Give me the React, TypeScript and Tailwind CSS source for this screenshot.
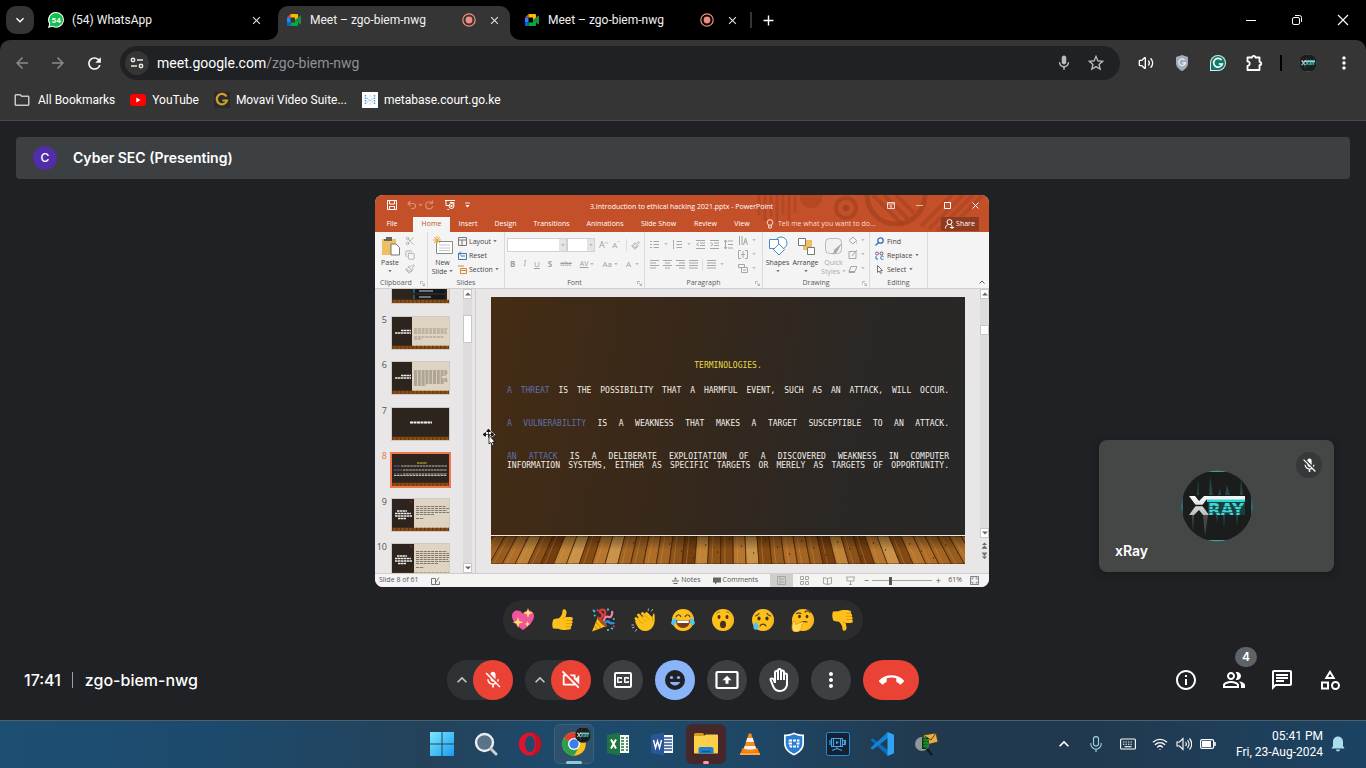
import React from "react";
import {
  MdArrowBack,
  MdArrowForward,
  MdRefresh,
  MdStarOutline,
  MdMoreVert,
  MdMicOff,
  MdOutlineMic,
  MdOutlineVideocamOff,
  MdOutlineClosedCaption,
  MdOutlineBackHand,
  MdCallEnd,
  MdInfoOutline,
  MdOutlinePeopleAlt,
  MdOutlineChat,
  MdOutlineCategory,
  MdClose,
  MdAdd,
  MdExpandMore,
  MdExpandLess,
  MdOutlineFolder,
} from "react-icons/md";
import { Volume2, Wifi, Scissors, Copy, Paintbrush } from "lucide-react";

/* ---------- shared drawings ---------- */

function MeetLogo() {
  return (
    <svg viewBox="0 0 16 16" className="size-4 shrink-0" aria-hidden="true">
      <path d="M1 5.5 4.5 2v3.500z" fill="#ea4335" />
      <path d="M1 5.500h3.500v5H1z" fill="#2684fc" />
      <path d="M1 10.500h3.500V14H2a1 1 0 0 1-1-1z" fill="#0066da" />
      <path d="M4.500 2H11a1 1 0 0 1 1 1v4L9 8.500v-3H4.500z" fill="#ffba00" />
      <path d="M4.500 10.500H9V8l3 1.500V13a1 1 0 0 1-1 1H4.500z" fill="#00ac47" />
      <path d="M9 8l5-4.300c.4-.3 1-.1 1 .4v7.800c0 .5-.6.700-1 .4z" fill="#1e8e3e" />
    </svg>
  );
}

function WhatsAppLogo() {
  return (
    <svg viewBox="0 0 16 16" className="size-4 shrink-0" aria-hidden="true">
      <path d="M8.200 0a7.800 7.800 0 1 1-3.700 14.700L0 16l1.200-4.200A7.800 7.800 0 0 1 8.200 0z" fill="#fff" />
      <path d="M8.200 1a6.800 6.800 0 1 1-3.400 12.700L1.500 14.500l.9-3A6.800 6.800 0 0 1 8.200 1z" fill="#12c04b" />
      <text x="8.200" y="10.900" textAnchor="middle" fontSize="8" fontWeight="700" fontFamily="Roboto, sans-serif" fill="#fff">
        54
      </text>
    </svg>
  );
}

function RecordDot() {
  return (
    <svg viewBox="0 0 14 14" className="size-3.5 shrink-0" role="img" aria-label="Recording">
      <circle cx="7" cy="7" r="6.200" fill="none" stroke="#f28b82" strokeWidth="1.200" />
      <circle cx="7" cy="7" r="3.400" fill="#f28b82" />
    </svg>
  );
}

function XrayAvatar({ className }: { className: string }) {
  return (
    <svg viewBox="0 0 72 72" className={className} role="img" aria-label="xRay avatar">
      <defs>
        <clipPath id="xr-clip">
          <circle cx="36" cy="36" r="35.500" />
        </clipPath>
        <linearGradient id="xr-silver" x1="0" x2="0" y1="0" y2="1">
          <stop offset="0" stopColor="#ffffff" />
          <stop offset="1" stopColor="#b9bcbc" />
        </linearGradient>
      </defs>
      <g clipPath="url(#xr-clip)">
        <rect width="72" height="72" fill="#1b1c1c" />
        <path d="M0 0h72v2H0zM0 70h72v2H0z" fill="#3d9d9e" />
        <path d="M0 22h1.500v28H0zM70.500 22H72v28h-1.500z" fill="#35b5b8" />
        <path d="M16 25l1-18 1 18zM28 25l1-19 3 19zM37 25l2-7 1 7zM44 25l2-10 3 10zM59 25l1-16 2 16zM35 45l1 8 1-8zM42 45l1 13 1-13zM55 45l1 12 1-12z" fill="#24484a" />
        <path d="M13 45l-1 17-1-17zM22 45l2 21 3-21z" fill="#454848" />
        <path d="M27 28h37v17H27z" fill="#153f41" />
        <text x="27" y="44.500" fontSize="16.500" fontWeight="700" fontFamily="DejaVu Sans, sans-serif" fill="#45d6d4">
          RAY
        </text>
        <path d="M27 36.500h37M27 39.500h37M27 42.500h37" stroke="#174446" strokeWidth=".7" />
        <path d="M26 29h38v3H26z" fill="#25d8d6" />
        <path d="M24 26h40v3.500H23z" fill="#f2f4f4" />
        <path d="M8 26h6l4 5 5-5h5l-7 9.500 7 9.500h-6l-4-5-5 5H8l7-9.500z" fill="url(#xr-silver)" />
        <path d="M10 35.500h17" stroke="#1b1d1d" strokeWidth="1.500" />
      </g>
    </svg>
  );
}

/* ---------- browser chrome ---------- */

type Tab = { title: string; icon: React.ReactNode; recording: boolean; active: boolean };

const TABS: Tab[] = [
  { title: "(54) WhatsApp", icon: <WhatsAppLogo />, recording: false, active: false },
  { title: "Meet – zgo-biem-nwg", icon: <MeetLogo />, recording: true, active: true },
  { title: "Meet – zgo-biem-nwg", icon: <MeetLogo />, recording: true, active: false },
];

function BrowserTab({ tab }: { tab: Tab }) {
  return (
    <div
      className={
        tab.active
          ? "relative flex h-[34px] w-[232px] items-center rounded-t-[10px] bg-[#353535] pb-1.5 pl-2 pr-2"
          : "relative flex h-[34px] w-[232px] items-center pb-1.5 pl-2 pr-2"
      }
    >
      {tab.active && (
        <>
          <svg viewBox="0 0 10 10" className="absolute -left-2.5 bottom-0 size-2.5" aria-hidden="true">
            <path d="M10 0v10H0A10 10 0 0 0 10 0z" fill="#353535" />
          </svg>
          <svg viewBox="0 0 10 10" className="absolute -right-2.5 bottom-0 size-2.5" aria-hidden="true">
            <path d="M0 0v10h10A10 10 0 0 1 0 0z" fill="#353535" />
          </svg>
        </>
      )}
      <button type="button" className="flex min-w-0 flex-1 items-center gap-2 text-left text-xs text-[#f1f1f1]">
        {tab.icon}
        <span className="truncate">{tab.title}</span>
      </button>
      {tab.recording && <RecordDot />}
      <button type="button" aria-label="Close tab" className="ml-2.5 grid size-4 place-items-center text-[#e3e3e3]">
        <MdClose size={13} />
      </button>
    </div>
  );
}

function TabStrip() {
  return (
    <div className="flex h-10 items-end bg-black">
      <button type="button" aria-label="Search tabs" className="mb-1.5 ml-1.5 mr-1.5 grid size-7 place-items-center rounded-[10px] bg-[#353535] text-white">
        <MdExpandMore size={16} />
      </button>
      <div className="flex gap-1.5">
        {TABS.map((t, i) => (
          <BrowserTab key={i} tab={t} />
        ))}
      </div>
      <span className="mb-3 ml-0.5 h-4 w-0.5 bg-[#353535]" />
      <button type="button" aria-label="New tab" className="mb-2.5 ml-1.5 grid size-5 place-items-center text-white">
        <MdAdd size={17} />
      </button>
      <div className="ml-auto flex h-10">
        <button type="button" aria-label="Minimize" className="grid w-[46px] place-items-center">
          <svg viewBox="0 0 12 12" className="size-3"><path d="M1 6.500h10" stroke="#fff" /></svg>
        </button>
        <button type="button" aria-label="Restore" className="grid w-[46px] place-items-center">
          <svg viewBox="0 0 12 12" className="size-3" fill="none" stroke="#fff">
            <rect x="1.500" y="3.500" width="7" height="7" rx="1.500" />
            <path d="M4 1.500h4.500a2 2 0 0 1 2 2V8" />
          </svg>
        </button>
        <button type="button" aria-label="Close" className="grid w-[46px] place-items-center">
          <svg viewBox="0 0 12 12" className="size-3"><path d="M1 1l10 10M11 1 1 11" stroke="#fff" strokeWidth="1.100" /></svg>
        </button>
      </div>
    </div>
  );
}

function AddressRow() {
  return (
    <div className="flex h-[46px] items-center">
      <div className="flex gap-4 pl-3 text-[#8a8a8a]">
        <button type="button" aria-label="Back" className="grid size-5 place-items-center"><MdArrowBack size={18} /></button>
        <button type="button" aria-label="Forward" className="grid size-5 place-items-center"><MdArrowForward size={18} /></button>
        <button type="button" aria-label="Reload" className="grid size-5 place-items-center text-white"><MdRefresh size={19} /></button>
      </div>
      <div className="ml-4 flex h-[34px] flex-1 items-center rounded-full bg-[#202124] pl-[5px] pr-3.5">
        <button type="button" aria-label="Site information" className="grid size-6 place-items-center rounded-full bg-[#353535]">
          <svg viewBox="0 0 14 12" className="h-3 w-3.5" fill="none" stroke="#e8e8e8" strokeWidth="1.500">
            <circle cx="3" cy="3" r="1.700" />
            <path d="M7 3h6M1 9h6" />
            <circle cx="11" cy="9" r="1.700" />
          </svg>
        </button>
        <div className="ml-2 flex flex-1 items-center text-sm">
          <input aria-label="Address" defaultValue="meet.google.com" className="field-sizing-content bg-transparent text-white outline-none" />
          <span className="text-[#8f9195]">/zgo-biem-nwg</span>
        </div>
        <div className="flex gap-3 text-[#b9bbbe]">
          <button type="button" aria-label="Microphone access" className="grid size-5 place-items-center"><MdOutlineMic size={18} /></button>
          <button type="button" aria-label="Bookmark" className="grid size-5 place-items-center"><MdStarOutline size={20} /></button>
        </div>
      </div>
      <div className="ml-4 flex items-center gap-4 pr-3 text-white">
        <button type="button" aria-label="Sound" className="grid size-5 place-items-center"><Volume2 size={16} /></button>
        <button type="button" aria-label="Shield extension" className="grid size-5 place-items-center">
          <svg viewBox="0 0 14 16" className="h-4 w-3.5">
            <path d="M7 0l6 2v6c0 4-3 6.500-6 8-3-1.500-6-4-6-8V2z" fill="#a4acbb" />
            <path d="M9.500 5a3.300 3.300 0 1 0 .8 3H7.500" fill="none" stroke="#e9edf5" strokeWidth="1.300" />
          </svg>
        </button>
        <button type="button" aria-label="Grammar extension" className="grid size-5 place-items-center">
          <svg viewBox="0 0 16 16" className="size-4">
            <path d="M8 0a8 8 0 1 1 0 16H0V8a8 8 0 0 1 8-8z" fill="#d5ece7" />
            <path d="M8 1a7 7 0 1 1 0 14H1V8a7 7 0 0 1 7-7z" fill="#0e7c66" />
            <path d="M11.500 5A4.400 4.400 0 1 0 12.300 9H8.700" fill="none" stroke="#fff" strokeWidth="1.700" />
          </svg>
        </button>
        <button type="button" aria-label="Extensions" className="grid size-5 place-items-center">
          <svg viewBox="0 0 18 18" className="size-[18px]" fill="none" stroke="#fff" strokeWidth="1.800" strokeLinejoin="round">
            <path d="M2.500 3.500H7a1.700 1.700 0 0 1 3.400 0H14.500v4.300a1.700 1.700 0 0 1 0 3.400V16h-12v-4.200a2.200 2.200 0 0 0 0-4.400z" />
          </svg>
        </button>
        <span className="h-4 w-0.5 bg-black" />
        <button type="button" aria-label="Profile" className="grid size-5 place-items-center"><XrayAvatar className="size-[18px]" /></button>
        <button type="button" aria-label="Browser menu" className="grid size-5 place-items-center"><MdMoreVert size={20} /></button>
      </div>
    </div>
  );
}

function Bookmarks() {
  return (
    <nav className="flex h-[34px] items-center gap-[15px] pb-1.5 pl-3.5 text-xs text-white">
      <a href="#all" className="flex items-center gap-2"><MdOutlineFolder size={18} className="-mx-px text-[#c7c7c7]" />All Bookmarks</a>
      <a href="#youtube" className="flex items-center gap-1.5">
        <svg viewBox="0 0 16 12" className="h-3 w-4"><rect width="16" height="12" rx="3" fill="#f00" /><path d="M6.300 3.500v5l4.200-2.500z" fill="#fff" /></svg>
        YouTube
      </a>
      <a href="#movavi" className="flex items-center gap-1.5">
        <svg viewBox="0 0 16 16" className="size-4"><rect width="16" height="16" fill="#2a2a2a" /><path d="M12.500 4.500A5.200 5.200 0 1 0 13 8.500H8.500" fill="none" stroke="#d3a02a" strokeWidth="2.200" /></svg>
        Movavi Video Suite...
      </a>
      <a href="#metabase" className="flex items-center gap-1.5">
        <svg viewBox="0 0 16 16" className="size-4">
          <rect width="16" height="16" fill="#fff" />
          <path d="M3.500 3v10M12.500 3v10" stroke="#509ee3" strokeWidth="1.500" strokeDasharray="1.500 1" />
          <path d="M5 6l3 3 3-3" fill="none" stroke="#8fc0ee" strokeWidth="1.300" strokeDasharray="1.300 .8" />
          <path d="M8 3v2M8 11v2M5.700 9v2M10.300 9v2" stroke="#c9dff5" strokeWidth="1.200" />
        </svg>
        metabase.court.go.ke
      </a>
    </nav>
  );
}

/* ---------- shared presentation ---------- */

const WOOD = ["#b8732a", "#8d4f14", "#c98a3a", "#9f6120", "#d39a4c", "#7a420f", "#ad6a25", "#c07c30", "#935619"];

function WoodFloor({ className }: { className: string }) {
  const planks = Array.from({ length: 42 }, (_, i) => {
    const t0 = i * 12 - 10;
    const t1 = t0 + 12;
    const spread = (x: number) => 237 + (x - 237) * 1.07;
    return (
      <g key={i}>
        <polygon
          points={`${t0},0 ${t1},0 ${spread(t1)},28 ${spread(t0)},28`}
          fill={WOOD[(i * 5 + (i % 4)) % WOOD.length]}
          stroke="#4a260a"
          strokeWidth=".8"
        />
        <path d={`M${t0 + 4} 0L${spread(t0 + 4)} 28`} stroke="#e0aa62" strokeWidth=".9" opacity=".4" />
        <path d={`M${t0 + 8} ${((i * 7) % 20) + 3}h1.200`} stroke="#2c1604" strokeWidth="1" />
      </g>
    );
  });
  return (
    <svg viewBox="0 0 474 28" preserveAspectRatio="none" className={className} aria-hidden="true">
      <defs>
        <linearGradient id="floor-shade" x1="0" x2="0" y1="0" y2="1">
          <stop offset="0" stopColor="#000" stopOpacity=".45" />
          <stop offset=".5" stopColor="#000" stopOpacity=".05" />
        </linearGradient>
      </defs>
      {planks}
      <rect width="474" height="28" fill="url(#floor-shade)" />
    </svg>
  );
}

const MENU = [
  { name: "File", cls: "w-[38px] pr-1" },
  { name: "Home", cls: "w-[37px] bg-[#f5f4f5] font-medium text-[#c4502a]" },
  { name: "Insert", cls: "w-9" },
  { name: "Design", cls: "w-[39px]" },
  { name: "Transitions", cls: "w-[53px]" },
  { name: "Animations", cls: "w-[54px]" },
  { name: "Slide Show", cls: "w-[53px]" },
  { name: "Review", cls: "w-[41px]" },
  { name: "View", cls: "w-8" },
];

function Caret() {
  return (
    <svg viewBox="0 0 4 3" className="h-[3px] w-1 shrink-0 opacity-70" aria-hidden="true"><path d="M.3 0h3.400L2 2.200z" fill="currentColor" /></svg>
  );
}

function PptHeader() {
  return (
    <div className="relative h-[37px] overflow-hidden bg-[#c4502a] text-[7px] text-white">
      <svg viewBox="0 0 250 37" className="absolute right-0 top-0 h-[37px] w-[250px]" fill="none" stroke="#a9421f" aria-hidden="true">
        <path d="M20 0v20M26 0v26M32 0v22M38 0v28M44 0v20M50 0v28M56 0v18" strokeWidth="3" opacity=".55" />
        <circle cx="72" cy="2" r="11" fill="#a9421f" stroke="none" opacity=".6" />
        <circle cx="107" cy="13" r="10" strokeWidth="4" opacity=".8" />
        <circle cx="107" cy="13" r="3" fill="#a9421f" />
        <circle cx="157" cy="0" r="29" strokeWidth="5" opacity=".8" />
        <path d="M134 0l30 30M145 0l24 24M157 0l18 18" strokeWidth="4" opacity=".7" />
        <path d="M190 34l34-34M198 36l36-36M207 37l37-37M182 31l31-31" strokeWidth="4" opacity=".6" />
      </svg>
      <div className="relative flex h-[22px] items-center pb-0.5 pl-3 pr-2">
        <div className="flex w-[202px] items-center gap-2.5">
          <svg viewBox="0 0 10 10" className="size-2.5" fill="none" stroke="#fff"><path d="M.5.5h9v9h-9zM2.500.5v3.500h5V.5M2.500 9.500v-3h5v3" /></svg>
          <svg viewBox="0 0 28 10" className="h-2.5 w-7" fill="none" stroke="#dc8c70" strokeWidth="1.200">
            <path d="M3.500 1 1 3.500 3.500 6M1 3.500h5a2.500 2.500 0 0 1 0 5H4" /><path d="M12 4l1.500 1.500L15 4" /><path d="M25 3a3.600 3.600 0 1 0 .8 3M25.500.5V3.500h-3" />
          </svg>
          <svg viewBox="0 0 10 10" className="size-2.5" fill="none" stroke="#fff"><path d="M0 .5h10M1 .5v5h3M4 9.500l-2 .5M5 2.500h4v2" /><circle cx="6.500" cy="6" r="2.500" /><path d="M6 5l1.500 1L6 7z" /></svg>
          <svg viewBox="0 0 5 6" className="h-1.5 w-[5px]"><path d="M0 1h5" stroke="#fff" strokeWidth=".8" /><path d="M.5 3h4L2.500 5.500z" fill="#fff" /></svg>
        </div>
        <span className="whitespace-nowrap pl-px pt-1">3.Introduction to ethical hacking 2021.pptx - PowerPoint</span>
        <div className="ml-auto flex items-center gap-[21px] pr-0.5">
          <svg viewBox="0 0 8 7" className="h-[7px] w-2" fill="none" stroke="#fff"><path d="M.5.5h7v6h-7zM.5 2h7M4 6V3.500M3 4.500l1-1 1 1" strokeWidth=".8" /></svg>
          <svg viewBox="0 0 7 7" className="size-[7px]"><path d="M0 3.500h7" stroke="#e9b7a5" /></svg>
          <svg viewBox="0 0 7 7" className="size-[7px]" fill="none" stroke="#fff"><path d="M.5.500h6v6h-6z" /></svg>
          <svg viewBox="0 0 7 7" className="size-[7px]" stroke="#fff"><path d="M.5.500l6 6M6.500.500l-6 6" /></svg>
        </div>
      </div>
      <div className="relative flex h-[15px] items-stretch">
        {MENU.map((m) => (
          <button type="button" key={m.name} className={"whitespace-nowrap text-center " + m.cls}>{m.name}</button>
        ))}
        <svg viewBox="0 0 8 10" className="ml-2 mt-0.5 h-2.5 w-2" fill="none" stroke="#f6ddd4"><circle cx="4" cy="3.500" r="2.800" /><path d="M2.700 6v3h2.600V6" /></svg>
        <button type="button" className="ml-1 whitespace-nowrap text-[#f6ddd4]">Tell me what you want to do...</button>
        <button type="button" className="ml-auto mr-2.5 flex h-[14px] w-[38px] items-center justify-center gap-0.5 bg-[#8e3c20]">
          <svg viewBox="0 0 9 10" className="h-2.5 w-[9px]" fill="none" stroke="#fff"><circle cx="4.500" cy="3" r="2.500" /><path d="M.5 9.500c0-4 3-4 4-4s2 .3 2.500 1M5 8.500h4M7 6.500v3.500" /></svg>
          Share
        </button>
      </div>
    </div>
  );
}

function Group({ name, width, children, launcher = true }: { name: string; width: string; children: React.ReactNode; launcher?: boolean }) {
  return (
    <div className={"relative flex h-14 flex-col border-r border-[#dcdadb] " + width}>
      <div className="flex h-[46px] pt-1">{children}</div>
      <div className="text-center leading-[10px] text-[#5c5c5c]">{name}</div>
      {launcher && (
        <svg viewBox="0 0 5 5" className="absolute bottom-0.5 right-0.5 size-[5px]" fill="none" stroke="#a8a8a8" strokeWidth=".8" aria-hidden="true"><path d="M.5 3V.5H3M2 2l2.500 2.500M4.500 2.500v2h-2" /></svg>
      )}
    </div>
  );
}

function BigTool({ icon, lines, width, dim = false }: { icon: React.ReactNode; lines: string[]; width: string; dim?: boolean }) {
  return (
    <button type="button" className={"flex flex-col items-center leading-[9px] " + width + (dim ? " text-[#a9a9a9]" : "")}>
      {icon}
      <span className="mt-0.5 whitespace-nowrap">{lines[0]}</span>
      <span className="flex h-[9px] items-center gap-0.5">{lines[1]}<Caret /></span>
    </button>
  );
}

function LineIcon({ d, wide = false }: { d: string; wide?: boolean }) {
  return (
    <svg viewBox={wide ? "0 0 14 9" : "0 0 9 9"} className={wide ? "h-[9px] w-3.5 shrink-0" : "size-[9px] shrink-0"} fill="none" stroke="#a6a6a6" aria-hidden="true"><path d={d} /></svg>
  );
}

function Ribbon() {
  return (
    <div className="flex h-[57px] border-b border-[#cfcdce] bg-[#f5f4f5] text-[7px] text-[#444]">
      <Group name="Clipboard" width="w-[53px] pr-2.5">
        <BigTool
          width="w-[30px]"
          lines={["Paste", ""]}
          icon={
            <svg viewBox="0 0 19 20" className="h-5 w-[19px]"><path d="M1 3h14v16H1z" fill="#eebf63" /><path d="M5 1h6v4H3V3h2z" fill="#666" /><path d="M10 8h5l3.500 3.500V19H10z" fill="#fff" stroke="#777" /></svg>
          }
        />
        <div className="flex flex-col items-center gap-1 text-[#a6a6a6]">
          <Scissors size={10} /><Copy size={10} /><Paintbrush size={10} />
        </div>
      </Group>
      <Group name="Slides" width="w-[77px]" launcher={false}>
        <BigTool
          width="w-[29px]"
          lines={["New", "Slide"]}
          icon={
            <svg viewBox="0 0 20 20" className="size-5"><path d="M3.500 5.500h16v12h-16z" fill="#fff" stroke="#8b8b8b" /><path d="M6 9h11M6 12h11M6 14.500h11" stroke="#c6c6c6" /><path d="M4 0v8M0 4h8M1 1l6 6M7 1 1 7" stroke="#e9a93c" /></svg>
          }
        />
        <div className="flex flex-col gap-[3px] pl-px leading-[11px]">
          {[
            ["Layout", "M.5.5h8v8h-8zM.5 3h8M4 3v5.500", "#777"],
            ["Reset", "M.5 2.500h8v6h-8zM3 5h4M3 .5 1 2.500l2 2", "#3b78b8"],
            ["Section", "M2.500 3.500h6v5h-6zM0 1h6M2 5.500h6", "#d58a3d"],
          ].map(([label, d, c]) => (
            <button type="button" key={label} className="flex items-center gap-0.5">
              <svg viewBox="0 0 9 9" className="size-[9px]" fill="none" stroke={c}><path d={d} /></svg>
              {label}
              {label !== "Reset" && <Caret />}
            </button>
          ))}
        </div>
      </Group>
      <Group name="Font" width="w-[140px]">
        <div className="flex w-full flex-col pl-0.5 text-[#a0a0a0]">
          <div className="flex items-center pt-0.5">
            <label className="flex h-3.5 w-[60px] items-center border border-[#d2d0d1] bg-white">
              <input aria-label="Font name" className="h-full min-w-0 flex-1 outline-none" />
              <span className="grid h-full w-[7px] place-items-center bg-[#e6e4e5]"><Caret /></span>
            </label>
            <label className="flex h-3.5 w-7 items-center border border-[#d2d0d1] bg-white">
              <input aria-label="Font size" className="h-full min-w-0 flex-1 outline-none" />
              <span className="grid h-full w-[7px] place-items-center bg-[#e6e4e5]"><Caret /></span>
            </label>
            <button type="button" className="ml-1 text-[9px] leading-3">A<sup className="text-[6px]">^</sup></button>
            <button type="button" className="ml-1 text-[8px] leading-3">A<sup className="text-[6px]">ˇ</sup></button>
            <span className="ml-1.5 h-3 w-px bg-[#dcdadb]" />
            <Paintbrush size={9} className="ml-1" />
          </div>
          <div className="flex items-center gap-2 pl-[3px] pt-1.5 text-[8px] leading-3">
            <b>B</b><i className="font-serif">I</i><u>U</u><b>S</b><s className="text-[7px]">abc</s>
            <span className="flex items-center gap-0.5"><u className="text-[7px]">AV</u><Caret /></span>
            <span className="flex items-center gap-0.5">Aa<Caret /></span>
            <span className="flex items-center gap-1">A<Caret /></span>
          </div>
        </div>
      </Group>
      <Group name="Paragraph" width="w-[118px]">
        <div className="flex w-[93px] flex-col gap-2.5 pl-[5px] pt-[3px] text-[#a6a6a6]">
          <div className="flex h-[11px] items-center gap-[5px]">
            <LineIcon d="M0 1.500h2M3.500 1.500H9M0 4.500h2M3.500 4.500H9M0 7.500h2M3.500 7.500H9" /><Caret />
            <LineIcon d="M.5 0v3M3.500 1.500H9M.5 3.500v2.500M3.500 4.500H9M.5 6.500V9M3.500 7.500H9" /><Caret />
            <LineIcon d="M0 .5h9M4 3h5M4 5.500h5M0 8.500h9M3 2.500 .5 4.500 3 6" />
            <LineIcon d="M0 .5h9M4 3h5M4 5.500h5M0 8.500h9M.5 2.500 3 4.500 .5 6" />
            <LineIcon d="M4 1h5M4 4.500h5M4 8h5M1.500 0v9M0 2l1.500-2L3 2M0 7l1.500 2L3 7" />
          </div>
          <div className="flex h-[9px] items-center gap-1">
            <LineIcon d="M0 .5h9M0 3h6M0 5.500h9M0 8h6" /><LineIcon d="M0 .5h9M2 3h5M0 5.500h9M2 8h5" />
            <LineIcon d="M0 .5h9M3 3h6M0 5.500h9M3 8h6" /><LineIcon d="M0 .5h9M0 3h9M0 5.500h9M0 8h9" />
            <span className="h-3 w-px bg-[#dcdadb]" />
            <LineIcon d="M0 .5h9M0 3h9M0 5.500h9M0 8h9" /><Caret />
          </div>
        </div>
        <div className="flex flex-col gap-[5px] text-[#a6a6a6]">
          {["M1.500 0v9M4 0v9M5.500 9 7.500 2l2 7M6 6h3", "M3 .5H.5v8H3M7 .5h2.500v8H7M5 1v7M3 4.500h4", "M.5.5h6v3h-6zM3.500 3.500h6v5h-6zM5 6h3"].map((d) => (
            <span key={d} className="flex items-center"><LineIcon d={d} wide /><Caret /></span>
          ))}
        </div>
      </Group>
      <Group name="Drawing" width="w-[107px]">
        <BigTool
          width="w-[29px]"
          lines={["Shapes", ""]}
          icon={
            <svg viewBox="0 0 20 20" className="size-5" fill="#fff" stroke="#4d8ac9"><circle cx="13" cy="7" r="6" /><path d="M1.500 3.500h9v9h-9z" /><path d="M11 8l5.500 5.500L11 19l-5.500-5.500z" /></svg>
          }
        />
        <BigTool
          width="w-[27px]"
          lines={["Arrange", ""]}
          icon={
            <svg viewBox="0 0 20 20" className="size-5"><path d="M7 4h9v10H7z" fill="#eebf63" /><path d="M2.500 2.500h7v7h-7zM11.500 11.500h7v7h-7z" fill="#fff" stroke="#777" /></svg>
          }
        />
        <BigTool
          dim
          width="w-[29px]"
          lines={["Quick", "Styles"]}
          icon={
            <svg viewBox="0 0 20 20" className="size-5"><rect x="1.500" y="2.500" width="16" height="15" rx="4" fill="#f1f1f3" stroke="#b9b9b9" /><path d="M18 7l-5 9-4 3 1-5z" fill="#a9a9a9" /></svg>
          }
        />
        <div className="flex flex-col gap-[5px] text-[#a6a6a6]">
          {["M1 4.500 5 1l3.500 3.500L5 8zM9 5v3", "M1 1.500h7v7H1zM4 6l5-6", "M3 2.500h6l-2 5H1zM1 7.500v1h6"].map((d) => (
            <span key={d} className="flex items-center gap-1"><LineIcon d={d} /><Caret /></span>
          ))}
        </div>
      </Group>
      <Group name="Editing" width="w-[58px]" launcher={false}>
        <div className="flex flex-col gap-[3px] pl-[5px] leading-[11px]">
          <button type="button" className="flex items-center gap-[3px]">
            <svg viewBox="0 0 9 9" className="size-[9px]" fill="none" stroke="#2f6fb5" strokeWidth="1.300"><circle cx="5.500" cy="3.500" r="2.700" /><path d="M3.500 5.500.5 8.500" /></svg>Find
          </button>
          <button type="button" className="flex items-center gap-[3px]">
            <svg viewBox="0 0 9 9" className="size-[9px]" fill="none"><circle cx="2" cy="2.500" r="1.500" stroke="#8a4fa3" /><circle cx="6.500" cy="2.500" r="1.500" stroke="#555" /><path d="M1 5v3h2M8.500 5.500a1.700 1.700 0 1 0 0 2.500" stroke="#2f6fb5" /></svg>Replace<Caret />
          </button>
          <button type="button" className="flex items-center gap-[3px]">
            <svg viewBox="0 0 9 9" className="size-[9px]" fill="#fff" stroke="#777"><path d="M2.500.5v7l1.700-1.500L5.500 8.500l1-.5-1-2.500h2z" /></svg>Select<Caret />
          </button>
        </div>
      </Group>
      <button type="button" aria-label="Collapse ribbon" className="ml-auto self-end p-1">
        <svg viewBox="0 0 6 4" className="h-1 w-1.5" fill="none" stroke="#555"><path d="M.5 3.500 3 1l2.500 2.500" /></svg>
      </button>
    </div>
  );
}

type Thumb = { n: string; kind: "menu" | "split" | "title" | "terms" | "text"; rows?: number[] };

const THUMBS: Thumb[] = [
  { n: "", kind: "menu" },
  { n: "5", kind: "split", rows: [34, 32, 33, 0, 30, 8] },
  { n: "6", kind: "split", rows: [33, 34, 32, 28, 33, 34, 30, 12] },
  { n: "7", kind: "title" },
  { n: "8", kind: "terms" },
  { n: "9", kind: "text", rows: [30, 33, 31, 33, 18, 0, 8] },
  { n: "10", kind: "text", rows: [31, 33, 34, 33, 32, 33, 22, 0, 8] },
];

function ThumbArt({ t }: { t: Thumb }) {
  const light = t.kind === "split" || t.kind === "text";
  const edge = t.kind === "text" ? 22 : 20;
  return (
    <svg viewBox="0 0 57 32" className="h-8 w-[57px]" role="img" aria-label={"Slide " + (t.n || "4")}>
      <rect width="57" height="32" fill="#2d241d" />
      {light && <rect x={edge} width={57 - edge} height="32" fill="#dfd4c2" />}
      {light && <path d={t.kind === "text" ? "M5 12h10M3 14.500h16M3 17h17M6 19.500h8" : "M9 13.500h10M3 16h16"} stroke="#ececec" strokeWidth="1.600" strokeDasharray="2.500 .4" />}
      {t.kind === "text" && <path d="M18 1.500l2 2" stroke="#b3264a" />}
      {(t.rows || []).map((w, i) => (
        <path key={i} d={`M${edge + 2} ${(t.kind === "text" ? 7.5 : t.n === "5" ? 12 : 9) + i * 2}h${w}`} stroke="#4b443c" strokeWidth=".8" strokeDasharray="3 .8" opacity={t.n === "5" ? 0.55 : 0.8} />
      ))}
      {t.kind === "menu" && (
        <g>
          <path d="M55 0h2v30h-2z" fill="#dfd4c2" />
          <path d="M21 18h32v4H21zM21 24h32v4H21z" fill="#11191d" />
          <path d="M22 18v4M22 24v4" stroke="#3e9aa0" />
          <path d="M27 20h14M27 26h12" stroke="#cfcfcf" />
        </g>
      )}
      {t.kind === "title" && <path d="M18 14.500h22" stroke="#f1f1f1" strokeWidth="1.800" strokeDasharray="3 .5" />}
      {t.kind === "terms" && (
        <g strokeDasharray="2.500 .6">
          <path d="M25 9h10" stroke="#d9cf3b" />
          <path d="M2 12h6M2 16h8M2 20h8" stroke="#5a72b0" />
          <path d="M9 12h46M11 16h44M11 20h44M2 21.500h53" stroke="#cfcfcf" strokeWidth=".9" />
        </g>
      )}
      <svg x="0" y="28.500" width="57" height="3.500" viewBox="0 0 57 3.500">
        <rect width="57" height="3.500" fill="#8a4f16" />
        <path d="M0 1.750h57" stroke="#5b300b" strokeWidth="3.500" strokeDasharray="1.500 2.500" opacity=".6" />
      </svg>
    </svg>
  );
}

function ScrollArrow({ up }: { up: boolean }) {
  return (
    <button type="button" aria-label={up ? "Scroll up" : "Scroll down"} className="grid h-2.5 w-full place-items-center border border-[#c9c7c8] bg-white">
      <svg viewBox="0 0 6 4" className="h-1 w-1.5"><path d={up ? "M0 3.500h6L3 .5z" : "M0 .5h6L3 3.500z"} fill="#666" /></svg>
    </button>
  );
}

function ThumbPane() {
  return (
    <div className="flex w-[101px] border-r border-[#cfcdce]">
      <div className="h-[284px] w-[88px] overflow-hidden">
        <ol className="-mt-[19px] grid h-[319px] grid-rows-7">
          {THUMBS.map((t) => (
            <li key={t.n} className="flex items-start">
              <span className={"-mt-0.5 flex w-3.5 justify-end pr-0.5 text-[9px] leading-[11px] " + (t.n === "8" ? "text-[#e8714a]" : "text-[#555]")}>{t.n}</span>
              <span className={t.n === "8" ? "ml-px border-2 border-[#f0764d]" : "ml-0.5 border border-[#cfcac6]"}>
                <ThumbArt t={t} />
              </span>
            </li>
          ))}
        </ol>
      </div>
      <div className="flex w-[9px] flex-col bg-[#dedcdd]">
        <ScrollArrow up />
        <span className="mt-4 h-7 border border-[#c9c7c8] bg-white" />
        <span className="flex-1" />
        <ScrollArrow up={false} />
      </div>
    </div>
  );
}

function Term({ lead, rest }: { lead: string; rest: string }) {
  return (
    <>
      <span className="text-[#5b70ab]">{lead}</span> {rest}
    </>
  );
}

function SlideStage() {
  return (
    <div className="relative flex flex-1 justify-between">
      <div className="ml-[15px] mt-2 flex h-[267px] w-[474px] flex-col font-['DejaVu_Sans_Mono','Liberation_Mono',monospace] text-[8px] leading-[9px] text-[#f3efe8]">
        <div className="flex flex-1 flex-col bg-[linear-gradient(100deg,#452c14_0%,#35281c_45%,#2a2725_75%,#282828_100%)] px-4 pt-16">
          <h2 className="text-center text-[#e6dc48]">TERMINOLOGIES.</h2>
          <p className="mt-4 text-justify [text-align-last:justify]">
            <Term lead="A THREAT" rest="IS THE POSSIBILITY THAT A HARMFUL EVENT, SUCH AS AN ATTACK, WILL OCCUR." />
          </p>
          <p className="mt-6 text-justify [text-align-last:justify]">
            <Term lead="A VULNERABILITY" rest="IS A WEAKNESS THAT MAKES A TARGET SUSCEPTIBLE TO AN ATTACK." />
          </p>
          <p className="mt-6 text-justify [text-align-last:justify]">
            <Term lead="AN ATTACK" rest="IS A DELIBERATE EXPLOITATION OF A DISCOVERED WEAKNESS IN COMPUTER" />
            <br />
            INFORMATION SYSTEMS, EITHER AS SPECIFIC TARGETS OR MERELY AS TARGETS OF OPPORTUNITY.
          </p>
        </div>
        <WoodFloor className="h-[29px] w-full border-t border-[#f1ece2]" />
      </div>
      <div className="flex w-[9px] flex-col bg-[#dedcdd]">
        <ScrollArrow up />
        <span className="mt-[26px] h-2.5 border border-[#c9c7c8] bg-white" />
        <span className="flex-1" />
        <ScrollArrow up={false} />
        <svg viewBox="0 0 9 35" className="h-[35px] w-[9px] bg-[#e8e6e7]" fill="#666" aria-hidden="true"><path d="M2 7l2.500-2.500L7 7zM2 10l2.500-2.500L7 10zM2 10h5v.8H2zM2 14.500h5v.8H2zM2 15.500 4.500 18 7 15.500zM2 18.500 4.500 21 7 18.500z" /></svg>
      </div>
      <svg viewBox="0 0 14 18" className="absolute left-[7px] top-[140px] h-[18px] w-3.5" aria-hidden="true">
        <path d="M5.500 0l2 2.500h-4zM0 5.500l2.500-2v4zM11 5.500l-2.500-2v4zM5.500 2v7M2 5.500h7" fill="#111" stroke="#fff" strokeWidth="1.600" paintOrder="stroke" />
        <path d="M5.500 0l2 2.500h-4zM0 5.500l2.500-2v4zM11 5.500l-2.500-2v4zM5.500 2v7M2 5.500h7" fill="#111" stroke="#111" strokeWidth=".7" />
        <path d="M6 6v9l2-1.500 1.500 3.500 1.500-.8-1.500-3.200H12z" fill="#fff" stroke="#111" strokeWidth=".8" />
      </svg>
    </div>
  );
}

function StatusBar() {
  return (
    <div className="flex h-3.5 items-center border-t border-[#cfcdce] bg-[#f5f4f5] pl-1 pr-2.5 text-[7px] text-[#555]">
      <span>Slide 8 of 61</span>
      <svg viewBox="0 0 9 8" className="ml-3 h-2 w-[9px]" fill="none" stroke="#777"><path d="M.5 1.500h4v6h-4zM4.500 7.500h4v-3M5 5l3-4.500" /></svg>
      <div className="ml-auto flex h-full items-center">
        <button type="button" className="flex items-center gap-0.5"><svg viewBox="0 0 7 7" className="size-[7px]"><path d="M0 4h7M1.500 6.500h4" stroke="#666" /><path d="M2 2.500h3L3.500 0z" fill="#666" /></svg>Notes</button>
        <button type="button" className="ml-3 flex items-center gap-0.5"><svg viewBox="0 0 8 8" className="size-2" fill="#666"><path d="M0 .5h8v5H4l-2 2v-2H0z" /></svg>Comments</button>
        <button type="button" aria-label="Normal view" className="ml-3 grid h-full w-[23px] place-items-center bg-[#cfcdce]"><LineIcon d="M.5.5h8v8h-8zM3 .5v8M4 3h3M4 6h3" /></button>
        <button type="button" aria-label="Slide sorter" className="grid w-[23px] place-items-center"><LineIcon d="M.5.5h3v3h-3zM5.500.5h3v3h-3zM.5 5.500h3v3h-3zM5.500 5.500h3v3h-3z" /></button>
        <button type="button" aria-label="Reading view" className="grid w-[23px] place-items-center"><LineIcon d="M.5 1.500l4 1v6l-4-1zM8.500 1.500l-4 1v6l4-1z" /></button>
        <button type="button" aria-label="Slide show" className="grid w-[23px] place-items-center"><LineIcon d="M0 1h9M1 1v4h7V1M4.500 5v3M3 8.500h3" /></button>
        <button type="button" aria-label="Zoom out" className="w-2 text-[9px] leading-3">−</button>
        <input
          type="range"
          aria-label="Zoom"
          min={0}
          max={100}
          defaultValue={30}
          className="mx-0.5 h-2 w-[60px] appearance-none bg-[linear-gradient(#a3a3a3,#a3a3a3)] bg-[length:100%_1px] bg-center bg-no-repeat [&::-webkit-slider-thumb]:h-2 [&::-webkit-slider-thumb]:w-[3px] [&::-webkit-slider-thumb]:appearance-none [&::-webkit-slider-thumb]:bg-[#555]"
        />
        <button type="button" aria-label="Zoom in" className="w-2 text-[9px] leading-3">+</button>
        <span className="ml-1.5">61%</span>
        <svg viewBox="0 0 9 9" className="ml-2 size-[9px]" fill="none" stroke="#666"><path d="M.5.5h8v8h-8zM2 3.500V2h1.500M5.500 2H7v1.500M7 5.500V7H5.500M3.500 7H2V5.500" strokeWidth=".8" /></svg>
      </div>
    </div>
  );
}

function Presentation() {
  return (
    <section aria-label="Shared screen" className="overflow-hidden rounded-lg bg-[#e8e6e7] font-['Open_Sans','Noto_Sans',sans-serif]">
      <PptHeader />
      <Ribbon />
      <div className="flex h-[284px]">
        <ThumbPane />
        <SlideStage />
      </div>
      <StatusBar />
    </section>
  );
}

/* ---------- reactions ---------- */

function Face({ children }: { children: React.ReactNode }) {
  return (
    <>
      <circle cx="12" cy="12" r="11" fill="#fcc21b" />
      <path d="M12 1a11 11 0 0 1 11 11 11 11 0 0 1-11 11 13 13 0 0 0 8-11A12 12 0 0 0 12 1z" fill="#f9a825" opacity=".45" />
      {children}
    </>
  );
}

function Thumb() {
  return (
    <>
      <path d="M2 12.500c0-1 1-1.700 2.500-1.700L8 10.300c2-2 3.500-4 3.500-7.300 0-2.500 4-2.500 4 1 0 2-.5 3.300-1 5h5.500c2.200 0 2.500 2.900.8 3.400 1.300.7 1.100 2.800-.3 3.200 1 .8.7 2.700-.6 3 .7 1.400-.1 3-1.600 3-4.300.6-8 .4-11-.9L2 20.400c-1-2-1-6 0-7.900z" fill="#fcc21b" />
      <path d="M20.500 12.500h-5M20.200 15.700h-5M19.500 18.800h-4.300M14.500 9c-1.300.3-2.300 1-2.800 2" fill="none" stroke="#e59600" strokeWidth=".9" strokeLinecap="round" />
    </>
  );
}

const REACTIONS: { name: string; art: React.ReactNode }[] = [
  {
    name: "Sparkling heart",
    art: (
      <>
        <path d="M12 22C6 18 1 13 1 8c0-6 8-7.500 11-2 3-5.500 11-4 11 2 0 5-5 10-11 14z" fill="#f0559b" />
        <path d="M17 0l1.200 3.800L22 5l-3.800 1.200L17 10l-1.200-3.800L12 5l3.800-1.200zM7 9l1.300 4 4.200 1.300-4.200 1.200L7 20l-1.300-4.500L1.500 14.300 5.700 13zM16.500 13l.7 2.300 2.300.7-2.300.7-.7 2.300-.7-2.300-2.300-.7 2.300-.7z" fill="#ffe36c" />
      </>
    ),
  },
  { name: "Thumbs up", art: <Thumb /> },
  {
    name: "Party popper",
    art: (
      <>
        <path d="M7 9l8.500 9L1 23.500z" fill="#fcc21b" />
        <path d="M5 14l5 6M3.500 18l3 3.500" stroke="#e59600" strokeWidth="1.500" />
        <path d="M6 8.500c3-.5 10 6 10 10-2 1.500-10-6-10-10z" fill="#a4511f" />
        <path d="M9 11c3-2 4-4 1-6s0-4 3-3 0 5 1 7" fill="none" stroke="#d93b3b" strokeWidth="2.400" />
        <path d="M13 13c0-4 3-5 5-4s4-3 3-6" fill="none" stroke="#f283b0" strokeWidth="2.200" />
        <path d="M14 15c2-3 4-1 5 0s3-1 4 1" fill="none" stroke="#2f8fe0" strokeWidth="2.400" />
        <path d="M2 2l2 2M16 1.500h2M20 20l2 1M3 7l1.500 1M22 11h1.500M17 21v2" stroke="#40c0e7" strokeWidth="1.800" />
        <path d="M6 1.500l1 1.500M22 18.500l1.500-.5M11 8l1-1" stroke="#e0436b" strokeWidth="1.800" />
      </>
    ),
  },
  {
    name: "Clapping hands",
    art: (
      <>
        <g stroke="#fcc21b" strokeWidth="3" strokeLinecap="round">
          <path d="M5 10.500l7 7M7.500 7l8 8M11.500 5.500l8 8M15.500 5.500l5 5" />
        </g>
        <path d="M4 13 8 9l9-1 5 3V6.500c0-1.500 1.500-1.500 1.500 0 .5 4 .3 8-1 11-2.500 5.500-8.500 6.800-12.500 4.500C7.500 20.500 5 16.500 4 13z" fill="#fcc21b" />
        <path d="M6.500 10.500l5 5M9.500 8l5.500 5.500M13.500 7l4.500 4.500M21.500 8v5" fill="none" stroke="#e59600" strokeWidth=".9" strokeLinecap="round" />
        <path d="M17 3l.5-2.500M20 3.500 22 1M3.500 19l-2.500 1M6 21l-2 2.500M3 17H.5" stroke="#b5c1c8" strokeWidth=".9" />
      </>
    ),
  },
  {
    name: "Tears of joy",
    art: (
      <Face>
        <path d="M5 12h14c0 5-3 8-7 8s-7-3-7-8z" fill="#7a3a1d" />
        <path d="M6 12.500h12l-.5 2.500h-11z" fill="#fff" />
        <path d="M5 9c1-3 4-3 5 0M14 9c1-3 4-3 5 0" fill="none" stroke="#5a3a1a" strokeWidth="1.200" />
        <path d="M5 10c-5 1-6 6-3.500 7S6 14 5 10zM19 10c5 1 6 6 3.500 7S18 14 19 10z" fill="#4fc3f7" />
      </Face>
    ),
  },
  {
    name: "Surprised",
    art: (
      <Face>
        <ellipse cx="8" cy="9" rx="1.500" ry="2" fill="#4a2f17" />
        <ellipse cx="16" cy="9" rx="1.500" ry="2" fill="#4a2f17" />
        <ellipse cx="12" cy="16.500" rx="3" ry="3.800" fill="#4a2f17" />
        <path d="M5.500 5.500C6.500 4 8 3.800 9 4M15 4c1-.2 2.500 0 3.500 1.500" fill="none" stroke="#a8721a" strokeWidth=".9" />
      </Face>
    ),
  },
  {
    name: "Crying",
    art: (
      <Face>
        <ellipse cx="8" cy="10.500" rx="1.600" ry="2" fill="#4a2f17" />
        <ellipse cx="16" cy="10.500" rx="1.600" ry="2" fill="#4a2f17" />
        <path d="M9 18c1-2.500 5-2.500 6 0M4.500 8C6 7.500 7.500 6.500 8 5.500M16 5.500c.5 1 2 2 3.500 2.500" fill="none" stroke="#5a3a1a" strokeWidth="1.200" strokeLinecap="round" />
        <path d="M5 13.500c1.700 2.200 2.600 4 2.600 5.600a2.600 2.600 0 0 1-5.200 0c0-1.600.9-3.400 2.600-5.600z" fill="#4fc3f7" />
      </Face>
    ),
  },
  {
    name: "Thinking",
    art: (
      <Face>
        <ellipse cx="8.500" cy="8.500" rx="1.400" ry="1.800" fill="#4a2f17" />
        <ellipse cx="16" cy="8.500" rx="1.400" ry="1.800" fill="#4a2f17" />
        <path d="M5.500 5.500c1.500-.8 3-.8 4.500 0M14 4c1.500-1.500 3.500-1.500 5 .5M9.500 15c2-1.300 4.500-1.500 6.500-1" fill="none" stroke="#5a3a1a" strokeWidth="1.200" strokeLinecap="round" />
        <path d="M2 14c1-1.500 2.500-.5 2.500 1v1.500L11 14c2-.5 2.500 1.500 1 2l-2 1c1 .5 1 1.500.3 2 .3 3-2.300 5-5.300 5S1 22 1 19.500c0-2 .3-4 1-5.500z" fill="#ffdb5e" stroke="#e59600" strokeWidth=".7" />
      </Face>
    ),
  },
  { name: "Thumbs down", art: <g transform="matrix(1 0 0 -1 0 24)"><Thumb /></g> },
];

function Reactions() {
  return (
    <div className="mx-auto flex h-10 items-center rounded-full bg-[#2c2c2c]">
      {REACTIONS.map((r) => (
        <button type="button" key={r.name} aria-label={r.name} className="grid size-10 place-items-center">
          <svg viewBox="0 0 24 24" className="size-6">{r.art}</svg>
        </button>
      ))}
    </div>
  );
}

/* ---------- call controls ---------- */

function SplitControl({ label, icon }: { label: string; icon: React.ReactNode }) {
  return (
    <div className="flex h-10 w-[66px] rounded-full bg-[#2f3235]">
      <button type="button" aria-label={label + " settings"} className="grid w-[26px] place-items-center pl-1 text-[#c4c7c5]"><MdExpandLess size={20} /></button>
      <button type="button" aria-label={label} className="grid size-10 place-items-center rounded-full bg-[#ea4335] text-white">{icon}</button>
    </div>
  );
}

function RoundControl({ label, active = false, children }: { label: string; active?: boolean; children: React.ReactNode }) {
  return (
    <button
      type="button"
      aria-label={label}
      className={active ? "grid size-10 place-items-center rounded-full bg-[#8ab4f8] text-[#202124]" : "grid size-10 place-items-center rounded-full bg-[#3c4043] text-white"}
    >
      {children}
    </button>
  );
}

function CallBar() {
  return (
    <div className="grid grid-cols-[1fr_auto_1fr] items-center px-2">
      <div className="flex items-center text-base font-medium text-white">
        <span>17:41</span>
        <span className="ml-[11px] mr-3 h-4 w-px bg-[#9aa0a6]" />
        <span>zgo-biem-nwg</span>
      </div>
      <div className="flex gap-3">
        <SplitControl label="Microphone" icon={<MdMicOff size={20} />} />
        <SplitControl label="Camera" icon={<MdOutlineVideocamOff size={22} />} />
        <RoundControl label="Captions"><MdOutlineClosedCaption size={24} /></RoundControl>
        <RoundControl label="Reactions" active>
          <svg viewBox="0 0 24 24" className="size-6">
            <circle cx="12" cy="12" r="10" fill="#202124" />
            <circle cx="8.500" cy="9.500" r="1.600" fill="#8ab4f8" />
            <circle cx="15.500" cy="9.500" r="1.600" fill="#8ab4f8" />
            <path d="M6.900 14h10.200c-.8 2-2.800 3.500-5.100 3.500S7.700 16 6.900 14z" fill="#8ab4f8" />
          </svg>
        </RoundControl>
        <RoundControl label="Present now">
          <svg viewBox="0 0 24 20" className="h-5 w-6">
            <rect x="1.500" y="2" width="21" height="16" rx="1" fill="none" stroke="#fff" strokeWidth="2.200" />
            <path d="M12 5.800l4.500 4.500h-3v3.500h-3v-3.500h-3z" fill="#fff" />
          </svg>
        </RoundControl>
        <RoundControl label="Raise hand"><MdOutlineBackHand size={24} /></RoundControl>
        <RoundControl label="More options"><MdMoreVert size={24} /></RoundControl>
        <button type="button" aria-label="Leave call" className="grid h-10 w-14 place-items-center rounded-full bg-[#ea4335] text-white"><MdCallEnd size={25} /></button>
      </div>
      <div className="flex justify-end gap-6 text-white">
        <button type="button" aria-label="Meeting details"><MdInfoOutline size={24} /></button>
        <button type="button" aria-label="People" className="relative">
          <MdOutlinePeopleAlt size={24} />
          <span className="absolute -top-[21px] left-[13px] grid h-5 w-[22px] place-items-center rounded-full bg-[#5f6368] text-xs font-semibold">4</span>
        </button>
        <button type="button" aria-label="Chat"><MdOutlineChat size={24} /></button>
        <button type="button" aria-label="Activities"><MdOutlineCategory size={24} /></button>
      </div>
    </div>
  );
}

function SelfTile() {
  return (
    <div className="mb-[15px] mr-3.5 flex h-[132px] w-[235px] flex-col justify-between self-end justify-self-end rounded-lg bg-[#444746] shadow-[0_2px_8px_rgba(0,0,0,0.25)]">
      <div className="grid grid-cols-[1fr_72px_1fr] pt-[30px]">
        <span />
        <XrayAvatar className="size-[72px]" />
        <span className="-mt-[18px] mr-3 grid size-[26px] place-items-center justify-self-end rounded-full bg-[#36393a] text-white"><MdMicOff size={17} /></span>
      </div>
      <span className="-mt-2 pb-[11px] pl-4 text-sm font-semibold leading-5 text-white">xRay</span>
    </div>
  );
}

function Meeting() {
  return (
    <main className="flex flex-1 flex-col bg-[#202124] px-4 pb-5 pt-4 font-['Inter','Roboto',sans-serif]">
      <header className="flex h-[42px] items-center rounded bg-[#3c4043] pl-[17px] text-sm font-medium text-white">
        <span className="grid size-6 place-items-center rounded-full bg-[#512da8] text-xs font-medium">C</span>
        <h1 className="ml-4 font-semibold">Cyber SEC (Presenting)</h1>
      </header>
      <div className="mt-4 grid grid-cols-[1fr_614px_1fr] pr-0.5">
        <span />
        <Presentation />
        <SelfTile />
      </div>
      <div className="mb-5 mt-[13px] flex">
        <Reactions />
      </div>
      <CallBar />
    </main>
  );
}

/* ---------- desktop taskbar ---------- */

const APPS: { name: string; art: React.ReactNode; tone?: "active" | "alert" }[] = [
  {
    name: "Start",
    art: (
      <>
        <defs><linearGradient id="win" x1="0" y1="0" x2="1" y2="1" gradientUnits="objectBoundingBox"><stop offset="0" stopColor="#7be8fb" /><stop offset="1" stopColor="#1a9bf0" /></linearGradient></defs>
        <path d="M0 0h11.500v11.500H0zM12.500 0H24v11.500H12.500zM0 12.500h11.500V24H0zM12.500 12.500H24V24H12.500z" fill="url(#win)" />
      </>
    ),
  },
  {
    name: "Search",
    art: (
      <>
        <circle cx="10.500" cy="10.500" r="8.500" fill="#5b7388" stroke="#eceff1" strokeWidth="2.400" />
        <path d="M16.800 16.800 22 22" stroke="#c9cdd1" strokeWidth="3" strokeLinecap="round" />
      </>
    ),
  },
  {
    name: "Opera",
    art: (
      <>
        <ellipse cx="12" cy="12" rx="11.300" ry="11.500" fill="#e0142c" />
        <path d="M12 .5a11.400 11.400 0 0 1 0 23c4-1 6-6 6-11.500S16 1.500 12 .5z" fill="#a70e1f" opacity=".5" />
        <ellipse cx="12" cy="12" rx="5" ry="8.300" fill="#1f4a6c" />
      </>
    ),
  },
  {
    name: "Chrome",
    tone: "active",
    art: (
      <>
        <circle cx="12" cy="12" r="11.800" fill="#fbc116" />
        <path d="M12 12 1.800 6A11.800 11.800 0 0 1 22.200 6z" fill="#e33b2e" />
        <path d="M12 12 1.800 6A11.800 11.800 0 0 0 12 23.800l5-8.800z" fill="#2b9f4b" />
        <circle cx="12" cy="12" r="6" fill="#fff" />
        <circle cx="12" cy="12" r="4.700" fill="#3b7ded" />
      </>
    ),
  },
  {
    name: "Excel",
    art: (
      <>
        <path d="M12 3h11v18H12z" fill="#f5f7f5" />
        <path d="M15 6h3M20 6h2M15 9h3M20 9h2M15 12h3M20 12h2M15 15h3M20 15h2M15 18h3M20 18h2" stroke="#1f7244" strokeWidth="1.600" />
        <path d="M1 3 14 .5v23L1 21z" fill="#1f7244" />
        <path d="M5 7.500l5 9M10 7.500l-5 9" stroke="#fff" strokeWidth="2" />
      </>
    ),
  },
  {
    name: "Word",
    art: (
      <>
        <path d="M12 3h11v18H12z" fill="#f5f6fa" />
        <path d="M14 6h8M14 9h8M14 12h8M14 15h8M14 18h8" stroke="#2a5699" strokeWidth="1.300" />
        <path d="M1 3 14 .5v23L1 21z" fill="#2a5699" />
        <path d="M3.500 8l2 8 2-7 2 7 2-8" fill="none" stroke="#fff" strokeWidth="1.400" />
      </>
    ),
  },
  {
    name: "File Explorer",
    tone: "alert",
    art: (
      <>
        <path d="M0 3c0-1 .5-2 1.500-2H9l2 3H0z" fill="#d99b12" />
        <path d="M0 4h10l2-1.500h11c.6 0 1 .4 1 1V20.500c0 .6-.4 1-1 1H1c-.6 0-1-.4-1-1z" fill="#fbcf49" />
        <path d="M4.500 21.500V17a2 2 0 0 1 2-2h11a2 2 0 0 1 2 2v4.500z" fill="#1a7fd0" />
        <path d="M8 19.500h8" stroke="#0b5a9d" strokeWidth="1.500" />
      </>
    ),
  },
  {
    name: "VLC",
    art: (
      <>
        <path d="M4.500 16h15l2.500 6.500H2z" fill="#f57c00" />
        <path d="M10.800 1.500h2.400L19 19c-3 1.600-11 1.600-14 0z" fill="#f58a1d" />
        <path d="M9.300 6h5.400l1.300 4H8zM6.700 14h10.600l.8 2.500c-3 1.300-9 1.300-12.200 0z" fill="#f2f2f2" />
        <path d="M2 21h20v2H2z" fill="#ffa63d" />
      </>
    ),
  },
  {
    name: "Security client",
    art: (
      <>
        <path d="M12 .5c3 1.500 6 2 10 2V11c0 6-4 10-10 12.500C6 21 2 17 2 11V2.500c4 0 7-.5 10-2z" fill="#fff" />
        <path d="M12 2.300c3 1.300 5 1.800 8.300 1.900V11c0 5-3.300 8.400-8.300 10.800C7 19.400 3.700 16 3.700 11V4.200C7 4.100 9 3.600 12 2.300z" fill="#2a7fd0" />
        <path d="M7 7.500h3v2H6.500zM11 7.500h3v2h-3zM15 7.500h2.500v2H15zM6.500 10.500H10v2H6.500zM14.500 10.500h3v2h-3zM7 13.500h3v2H8zM11 13.500h3v2h-3zM15 13.500h2l-.5 2H15z" fill="#fff" />
      </>
    ),
  },
  {
    name: "Video editor",
    art: (
      <>
        <rect x=".5" y=".5" width="23" height="23" rx="2" fill="#16202e" stroke="#1d8fe0" />
        <path d="M5.500 6.500h11v8h-11zM7.500 6.500v8M14.500 6.500v8M16.500 8.500h2v4h-2M4 8v5M19.500 8v5M11 14.500V17M6 18.500l5-2 5 2" fill="none" stroke="#3fa4ec" strokeWidth="1.100" />
        <path d="M10 8.700v3.600l3-1.800z" fill="#3fa4ec" />
      </>
    ),
  },
  {
    name: "Code editor",
    art: (
      <>
        <path d="M1 7.500l1.600-1.200L18 18v6L.8 8.600c-.3-.3-.2-.8.2-1.100z" fill="#0b6cb8" />
        <path d="M1 16.500l1.600 1.200L18 6V0L.8 15.400c-.3.300-.2.800.2 1.100z" fill="#1583d4" />
        <path d="M17.500 0 24 2.800v18.400L17.500 24z" fill="#2fa3f5" />
      </>
    ),
  },
  {
    name: "Mail search",
    art: (
      <>
        <path d="M9 3l13-2 2 9-12 3z" fill="#e2b04a" stroke="#4a3410" strokeWidth=".8" />
        <path d="M9 3l8 5 5-7" fill="none" stroke="#4a3410" strokeWidth=".9" />
        <circle cx="8" cy="12" r="7" fill="#8d979c" />
        <path d="M8 5.500h6c1.500 4 1 9-2 11.500H8z" fill="#0b3a12" />
        <path d="M9 8h5M9 11h5.500M9 14h5M11 6v10M13 7v8" stroke="#23b13a" strokeWidth=".8" />
        <path d="M13 17l5 6" stroke="#15181b" strokeWidth="2.400" />
      </>
    ),
  },
];

function TaskButton({ app }: { app: (typeof APPS)[number] }) {
  const tone =
    app.tone === "active" ? " border border-[#3f617a] bg-[#2d516c]" : app.tone === "alert" ? " bg-[#46282b]" : "";
  return (
    <button type="button" aria-label={app.name} className={"relative grid size-10 place-items-center rounded-md" + tone}>
      <svg viewBox="0 0 24 24" className="size-6">{app.art}</svg>
      {app.tone === "active" && <XrayAvatar className="absolute right-0.5 top-0.5 size-4" />}
      {app.tone === "active" && <span className="absolute -bottom-px left-[11px] h-[3px] w-4 rounded-full bg-[#8fc9d6]" />}
      {app.tone === "alert" && <span className="absolute bottom-0 left-[17px] h-[3px] w-1.5 rounded-full bg-[#ff99a4]" />}
    </button>
  );
}

function Taskbar() {
  return (
    <footer className="grid h-12 grid-cols-[1fr_auto_1fr] items-center border-t border-[#4a6172] bg-[linear-gradient(90deg,#1d4f73_0%,#1c4a6d_15%,#24425a_31%,#1c4b6e_42%,#1f4664_56%,#21394e_68%,#21394e_80%,#1c4363_100%)] pb-0.5">
      <span />
      <div className="flex gap-1 pl-0.5">
        {APPS.map((a) => (
          <TaskButton key={a.name} app={a} />
        ))}
      </div>
      <div className="flex items-center justify-end pr-[21px] text-white">
        <button type="button" aria-label="Hidden icons" className="grid w-8 place-items-center"><MdExpandLess size={20} /></button>
        <button type="button" aria-label="Microphone in use" className="grid w-8 place-items-center text-[#a3d5e2]">
          <svg viewBox="0 0 12 16" className="h-4 w-3" fill="none" stroke="currentColor" strokeWidth="1.100"><rect x="3.500" y=".6" width="5" height="9.500" rx="2.500" /><path d="M.8 7v1a5.200 5.200 0 0 0 10.400 0V7M6 13.200V16" /></svg>
        </button>
        <button type="button" aria-label="Touch keyboard" className="grid w-8 place-items-center">
          <svg viewBox="0 0 16 12" className="h-3 w-4" fill="none" stroke="#fff" strokeWidth="1.100"><rect x=".6" y="1" width="14.800" height="10" rx="1" /><path d="M3 4h10M3 6.200h10" strokeDasharray="1.300 1.200" /><path d="M4.500 8.700h7" /></svg>
        </button>
        <button type="button" aria-label="Network, volume and battery" className="flex items-center gap-2 px-2">
          <Wifi size={16} />
          <svg viewBox="0 0 16 16" className="size-4" fill="none" stroke="#fff" strokeWidth="1.100"><path d="M1 6h2.500L7 2.500v11L3.500 10H1zM9.500 6a3 3 0 0 1 0 4M11.500 4.200a5.500 5.500 0 0 1 0 7.600M13.500 2.500a8 8 0 0 1 0 11" /></svg>
          <svg viewBox="0 0 16 10" className="h-2.5 w-4"><rect x=".6" y=".6" width="13" height="8.800" rx="1.500" fill="none" stroke="#fff" strokeWidth="1.200" /><rect x="2" y="2" width="9" height="6" fill="#fff" /><path d="M15 3v4" stroke="#fff" strokeWidth="1.500" /></svg>
        </button>
        <button type="button" className="ml-3 whitespace-nowrap text-right text-xs leading-4">05:41 PM<br />Fri, 23-Aug-2024</button>
        <button type="button" aria-label="Notifications" className="ml-2">
          <svg viewBox="0 0 14 16" className="h-4 w-3.5" fill="#a9deea"><path d="M7 .5a5 5 0 0 1 5 5V10l1.500 2.500H.5L2 10V5.500a5 5 0 0 1 5-5zM5 13.500h4a2 2 0 0 1-4 0z" /></svg>
        </button>
      </div>
    </footer>
  );
}

export default function App() {
  return (
    <div className="flex min-h-screen flex-col bg-black font-['Roboto','Noto_Sans',sans-serif]">
      <TabStrip />
      <div className="rounded-t-[10px] bg-[#353535]">
        <AddressRow />
        <Bookmarks />
      </div>
      <div className="h-px bg-[#4b4b4b]" />
      <Meeting />
      <Taskbar />
    </div>
  );
}
